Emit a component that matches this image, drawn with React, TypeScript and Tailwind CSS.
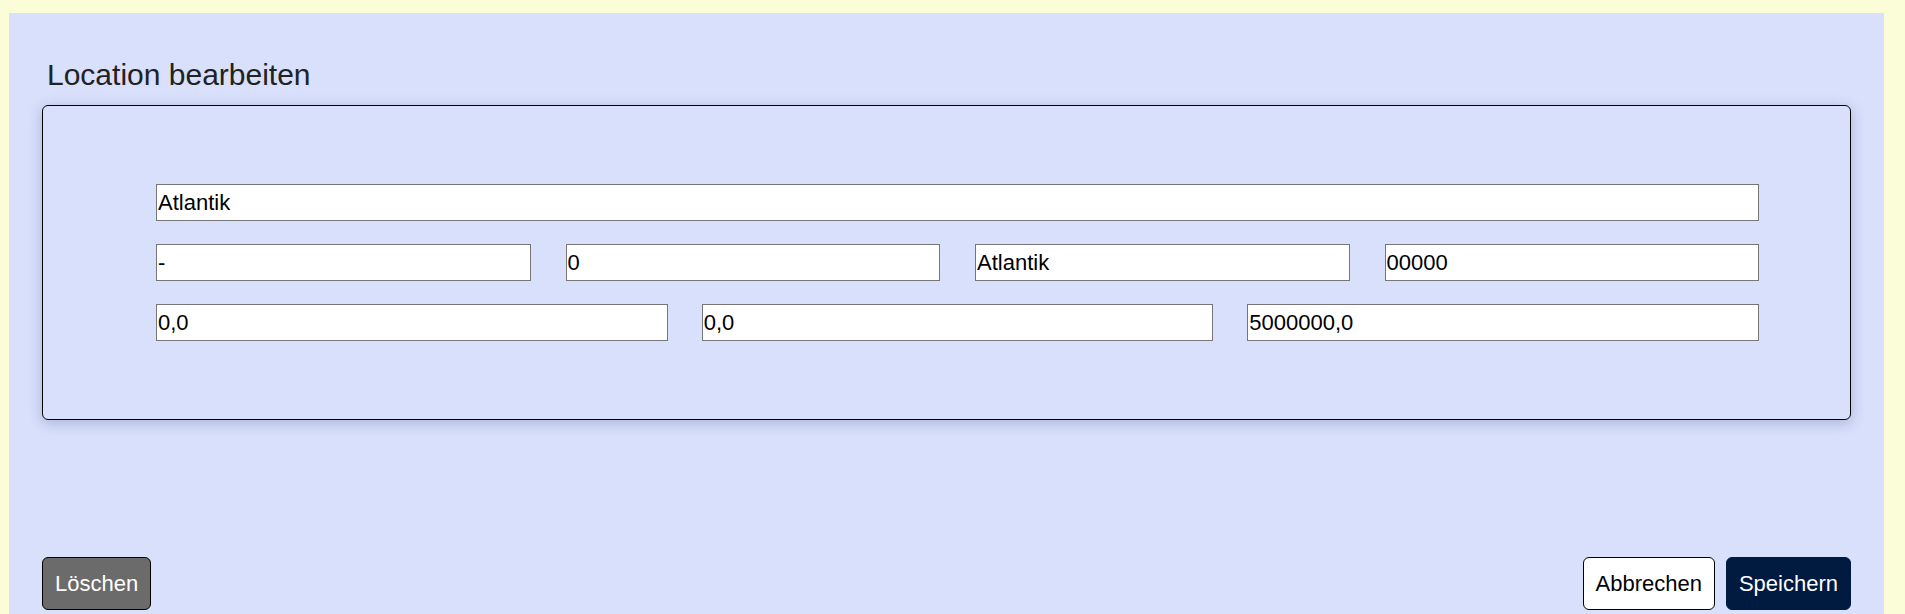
import React from 'react'

function Field({ value, className = '' }: { value: string; className?: string }) {
  return (
    <input
      defaultValue={value}
      className={`h-[37px] min-w-0 border border-[#767676] bg-white px-[1px] text-[22px] text-black outline-none ${className}`}
    />
  )
}

export default function App() {
  return (
    <div className="min-h-screen bg-[#fbfdd9] pt-[13px] pl-[9px] pr-[21px] font-['Liberation_Sans',Arial,sans-serif]">
      <div className="bg-[#d8e0fc] px-[33px] pt-[45px] pb-10">
        <h2 className="pl-[5px] text-[30px] leading-[34px] text-[#222]">Location bearbeiten</h2>

        <div className="mt-[13px] flex flex-col gap-[23px] rounded-md border border-black py-[78px] pl-[113px] pr-[91px] shadow-[0_3px_14px_rgba(50,60,110,0.28)]">
          <Field value="Atlantik" className="w-full" />
          <div className="grid grid-cols-4 gap-[35px]">
            <Field value="-" />
            <Field value="0" />
            <Field value="Atlantik" />
            <Field value="00000" />
          </div>
          <div className="grid grid-cols-3 gap-[34px]">
            <Field value="0,0" />
            <Field value="0,0" />
            <Field value="5000000,0" />
          </div>
        </div>

        <div className="mt-[137px] flex items-start justify-between">
          <button className="rounded-md border border-black bg-[#6b6b6b] px-3 py-[13px] text-[22px] leading-[25px] text-white">
            Löschen
          </button>
          <div className="flex gap-[11px]">
            <button className="rounded-md border border-black bg-white px-3 py-[13px] text-[22px] leading-[25px] text-black">
              Abbrechen
            </button>
            <button className="rounded-md border border-[#001a40] bg-[#001a40] px-3 py-[13px] text-[22px] leading-[25px] text-white">
              Speichern
            </button>
          </div>
        </div>
      </div>
    </div>
  )
}
